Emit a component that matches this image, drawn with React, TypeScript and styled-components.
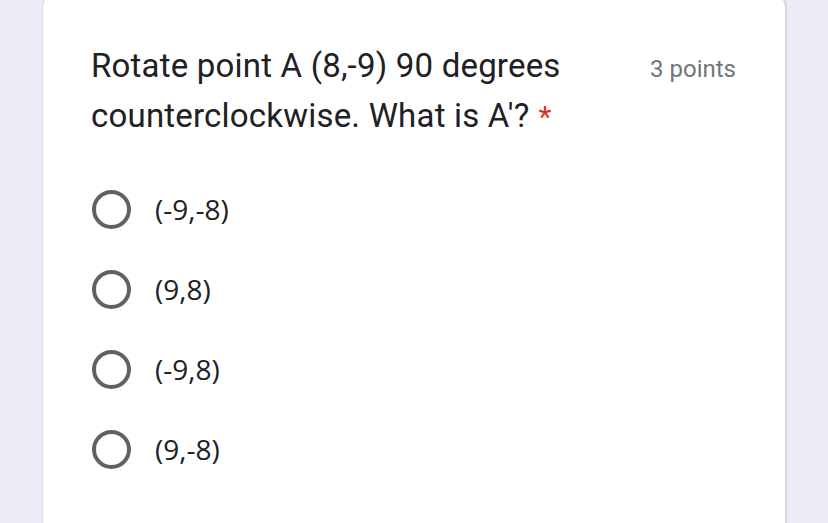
import React from "react";
import styled, { createGlobalStyle } from "styled-components";

const Global = createGlobalStyle`
  html, body {
    margin: 0;
    padding: 0;
    background: #f0ebf8;
    overflow: hidden;
  }
  * { box-sizing: border-box; }
`;

const Page = styled.div`
  width: 828px;
  height: 523px;
  padding: 0 42px;
  overflow: hidden;
  background: #f0ebf8;
`;

const Card = styled.div`
  margin-top: -8px;
  height: 560px;
  background: #ffffff;
  border: 1px solid #dadce0;
  border-radius: 16px;
  box-shadow: 1px 0 2px rgba(60, 64, 67, 0.15);
  padding: 48px 49px 0 48px;
`;

const Header = styled.div`
  display: flex;
  align-items: flex-start;
  gap: 40px;
`;

const Question = styled.div`
  flex: 1;
  font-family: Roboto, "Noto Sans", sans-serif;
  font-size: 33px;
  line-height: 50px;
  letter-spacing: 0.2px;
  color: #202124;
`;

const Required = styled.span`
  display: inline-block;
  color: #d93025;
  margin-left: 9px;
  font-size: 30px;
  line-height: 30px;
  letter-spacing: 0;
`;

const Points = styled.div`
  font-family: Roboto, "Noto Sans", sans-serif;
  font-size: 24px;
  line-height: 50px;
  padding-top: 3px;
  color: #70757a;
  white-space: nowrap;
`;

const Options = styled.div`
  display: flex;
  flex-direction: column;
  margin-top: 28px;
`;

const Option = styled.label`
  display: flex;
  align-items: center;
  height: 80px;
  gap: 24px;
`;

const Radio = styled.span`
  width: 39px;
  height: 39px;
  margin-left: 1px;
  border: 4px solid #5f6368;
  border-radius: 50%;
  flex: none;
`;

const OptionText = styled.span`
  font-family: "Open Sans", "Noto Sans", sans-serif;
  font-size: 28px;
  color: #202124;
`;

const options = ["(-9,-8)", "(9,8)", "(-9,8)", "(9,-8)"];

export default function App() {
  return (
    <>
      <Global />
      <Page>
        <Card>
          <Header>
            <Question>
              Rotate point A (8,-9) 90 degrees counterclockwise. What is A'?
              <Required>*</Required>
            </Question>
            <Points>3 points</Points>
          </Header>
          <Options>
            {options.map((o) => (
              <Option key={o}>
                <Radio />
                <OptionText>{o}</OptionText>
              </Option>
            ))}
          </Options>
        </Card>
      </Page>
    </>
  );
}
